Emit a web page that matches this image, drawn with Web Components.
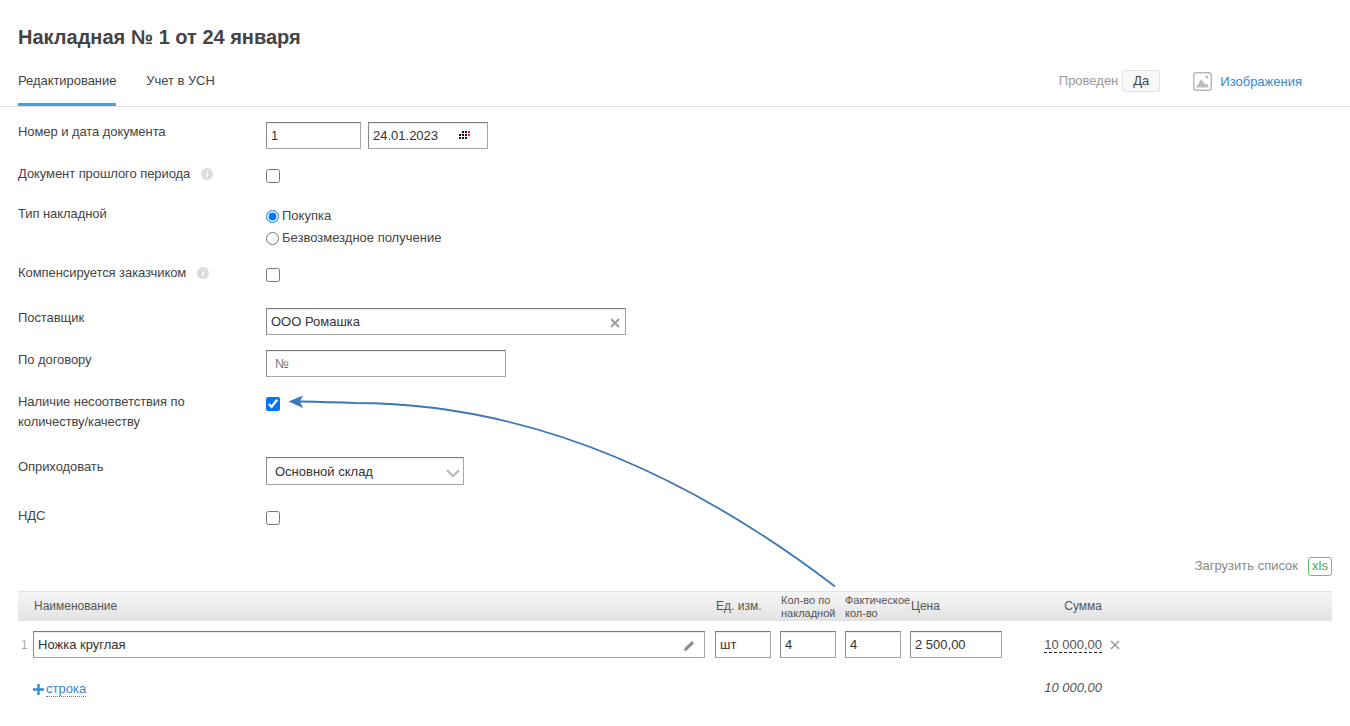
<!DOCTYPE html>
<html lang="ru"><head><meta charset="utf-8"><title>Накладная</title>
<style>
html,body{margin:0;padding:0;background:#fff}
body{font:13px/20px "Liberation Sans",Arial,sans-serif;color:#444;height:726px;overflow:hidden}
</style></head><body>
<inv-page>
  <inv-title>Накладная № 1 от 24 января</inv-title>
  <inv-tabs></inv-tabs>
  <inv-row label="Номер и дата документа" h="42" ct="1">
    <inv-field w="95">1</inv-field><inv-field w="120" pad="4" date gap>24.01.2023</inv-field>
  </inv-row>
  <inv-row label="Документ прошлого периода" info="202" h="40" ct="6"><inv-check></inv-check></inv-row>
  <inv-row label="Тип накладной" h="59" ct="2"><inv-radios></inv-radios></inv-row>
  <inv-row label="Компенсируется заказчиком" info="198" h="45" ct="6"><inv-check></inv-check></inv-row>
  <inv-row label="Поставщик" h="42" ct="1"><inv-field w="360" pad="4" clear>ООО Ромашка</inv-field></inv-row>
  <inv-row label="По договору" h="42" ct="1"><inv-field w="240" pad="8" muted>№</inv-field></inv-row>
  <inv-row label="Наличие несоответствия по количеству/качеству" h="65" ct="6" narrow><inv-check checked></inv-check></inv-row>
  <inv-row label="Оприходовать" h="49" ct="1"><inv-field w="198" pad="8" h="28" select>Основной склад</inv-field></inv-row>
  <inv-row label="НДС" h="50" ct="6"><inv-check></inv-check></inv-row>
  <inv-upload></inv-upload>
  <inv-table></inv-table>
  <inv-arrow></inv-arrow>
</inv-page>
<script>
function def(name,css,html,init){
  customElements.define(name,class extends HTMLElement{
    connectedCallback(){
      if(this.shadowRoot)return;
      const r=this.attachShadow({mode:'open'});
      r.innerHTML='<style>'+css+'</style>'+(typeof html==='function'?html(this):html);
      if(init)init(this,r);
    }
  });
}
def('inv-page',':host{display:block;position:relative;width:1350px;height:726px}','<slot></slot>');
def('inv-title',':host{display:block;padding:24px 18px 0;height:34px;font:bold 20px/26px "Liberation Sans",Arial,sans-serif;color:#444}','<slot></slot>');
const ICON_IMG=`<svg width="19" height="19" viewBox="0 0 19 19"><rect x=".75" y=".75" width="17.500" height="17.500" rx="2.500" fill="#fff" stroke="#b8b8b8" stroke-width="1.500"/><circle cx="14" cy="5" r="1.500" fill="#bbb"/><path d="M3 15.500 8.200 7 12.400 12.800 13.800 11.200 16 15.500Z" fill="#bbb"/></svg>`;
def('inv-tabs',`:host{display:flex;align-items:flex-start;height:48px;padding:0 18px;border-bottom:1px solid #e0e0e0;color:#444}
 .t{height:45px;line-height:45px;margin-right:30px;letter-spacing:-.05px}
 .a{border-bottom:3px solid #44a3dc}
 .sp{flex:1}
 .r{display:flex;align-items:center;height:45px}
 .p{color:#999;margin-right:4px}
 .y{border:1px solid #e2e2e2;background:#f8f8f8;border-radius:3px;height:20px;line-height:20px;width:36px;text-align:center;color:#444;margin-right:33px}
 svg{display:block;margin-right:8px;margin-top:2px}
 .l{color:#3a87c8;margin-right:30px;margin-top:2px}`,
 `<div class="t a">Редактирование</div><div class="t">Учет в УСН</div><div class="sp"></div>
  <div class="r"><span class="p">Проведен</span><span class="y">Да</span>${ICON_IMG}<span class="l">Изображения</span></div>`);
const ICON_INFO=`<svg width="12" height="12" viewBox="0 0 12 12"><circle cx="6" cy="6" r="6" fill="#dcdcdc"/><path d="M5.600 5.200 5.100 9.400H6.600L7.100 5.200Z M5.800 2.400H7.300L7.100 4.100H5.600Z" fill="#fff"/></svg>`;
def('inv-row',`:host{display:flex;align-items:flex-start;padding-left:18px;color:#444}
 .lab{width:248px;flex:none;position:relative;padding-top:1px;letter-spacing:-.07px}
 .lab.n span{display:block;width:180px}
 .i{position:absolute;top:3px}
 .ctl{display:flex;align-items:flex-start}`,
 h=>`<div class="lab ${h.hasAttribute('narrow')?'n':''}"><span>${h.getAttribute('label')}</span>${h.getAttribute('info')?`<span class="i" style="left:${h.getAttribute('info')-18-1}px;width:12px">${ICON_INFO}</span>`:''}</div><div class="ctl" style="padding-top:${h.getAttribute('ct')}px"><slot></slot></div>`,
 h=>{h.style.height=h.getAttribute('h')+'px'; if(!h.previousElementSibling||h.previousElementSibling.tagName==='INV-TABS')h.style.marginTop='14px';});
const DOTS=`<svg class="dots" width="11" height="8" viewBox="0 0 11 8" shape-rendering="crispEdges"><path d="M3 0h2v2H3zM6 0h2v2H6zM0 3h2v2H0zM3 3h2v2H3zM6 3h2v2H6zM0 6h2v2H0zM3 6h2v2H3zM6 6h2v2H6z" fill="#111"/><path d="M9 0h2v2H9zM9 3h2v2H9z" fill="#e8222e"/></svg>`;
const CLR=`<svg class="clr" width="10" height="10" viewBox="0 0 10 10"><path d="M1 1 9 9M9 1 1 9" stroke="#9a9a9a" stroke-width="1.800" fill="none"/></svg>`;
const CHEV=`<svg class="chev" width="14" height="9" viewBox="0 0 14 9"><path d="M1 1.200 7 7.200 13 1.200" stroke="#b5b5b5" stroke-width="2" fill="none"/></svg>`;
const PEN=`<svg class="pen" width="11" height="11" viewBox="0 0 11 11"><path d="M0 11 .7 8 7.800 .9 10.100 3.200 3 10.300Z" fill="#8c8c8c"/></svg>`;
def('inv-field',`:host{display:flex;box-sizing:border-box;align-items:center;position:relative;flex:none;height:27px;background:#fff;
   border:1px solid #a6a6a6;border-top-color:#7a7a7a;border-left-color:#8a8a8a;color:#333;white-space:nowrap;
   box-shadow:inset 0 1px 1px rgba(0,0,0,.08)}
 :host([gap]){margin-left:7px}
 :host([muted]){color:#777}
 :host([select]){padding-top:1px}
 .dots{position:absolute;left:90px;top:8px}
 .clr{position:absolute;right:5px;top:9px}
 .chev{position:absolute;right:3px;top:11px}
 .pen{position:absolute;right:9px;top:8px}`,
 h=>`<slot></slot>${h.hasAttribute('date')?DOTS:''}${h.hasAttribute('clear')?CLR:''}${h.hasAttribute('select')?CHEV:''}${h.hasAttribute('pen')?PEN:''}`,
 h=>{h.style.width=h.getAttribute('w')+'px';h.style.paddingLeft=(h.getAttribute('pad')||4)+'px';if(h.getAttribute('h'))h.style.height=h.getAttribute('h')+'px';});
def('inv-check',`:host{display:block;width:14px;height:14px}
 input{display:block;margin:0;width:14px;height:14px}`,
 h=>`<input type="checkbox" ${h.hasAttribute('checked')?'checked':''}>`);
def('inv-radios',`:host{display:block}
 label{display:flex;align-items:center;height:22px;color:#444}
 input{margin:0 3px 0 0;width:13px;height:13px}`,
 `<label><input type="radio" name="t" checked>Покупка</label><label><input type="radio" name="t">Безвозмездное получение</label>`);
def('inv-upload',`:host{display:flex;justify-content:flex-end;align-items:center;height:20px;padding:1px 18px 0 0;margin-bottom:15px;color:#888}
 .x{box-sizing:border-box;border:1px solid #65bd6c;border-radius:3px;color:#4aa354;height:19px;width:24px;line-height:16px;text-align:center;margin-left:10px}`,
 `<span>Загрузить список</span><span class="x">xls</span>`);
def('inv-table',`:host{display:block;margin:0 18px;color:#444}
 .g{display:grid;grid-template-columns:15px 682px 65px 65px 65px 92px 42px 58px 1fr}
 .h{height:30px;box-sizing:border-box;background:linear-gradient(#f6f6f6,#e2e2e2);border-top:1px solid #e2e2e2;align-items:center;color:#555;font-size:12px;line-height:14px}
 .h .s{font-size:11px;line-height:13px;white-space:nowrap}
 .h .o{padding-bottom:2px}
 .b{margin-top:10px;height:27px;align-items:center}
 .n{color:#aaa;padding-left:3px;font-size:12px}
 .nm{padding-left:1px}
 .sum{text-align:right;grid-column:7 / 9;color:#555}
 .sum u{text-decoration:none;border-bottom:1px dashed #222}
 .x{padding-left:8px;display:flex}
 .f{display:flex;justify-content:space-between;margin-top:20px;padding-left:15px;padding-right:230px}
 .add{color:#3a87c8;display:flex;align-items:center;margin-top:2px}
 .add span{border-bottom:1px dotted #3a87c8;line-height:14px}
 .add svg{margin-right:2px}
 .t{font-style:italic;color:#555}`,
 `<div class="g h"><div></div><div class="nm o">Наименование</div><div class="o" style="padding-left:1px">Ед. изм.</div><div class="s" style="padding-left:1px">Кол-во по<br>накладной</div><div class="s">Фактическое<br>кол-во</div><div class="o" style="padding-left:1px">Цена</div><div class="sum o">Сумма</div><div></div></div>
  <div class="g b"><div class="n">1</div><div><inv-field w="672" pen>Ножка круглая</inv-field></div><div><inv-field w="56">шт</inv-field></div><div><inv-field w="56">4</inv-field></div><div><inv-field w="56">4</inv-field></div><div><inv-field w="92">2 500,00</inv-field></div><div class="sum"><u>10 000,00</u></div><div class="x"><svg width="10" height="10" viewBox="0 0 10 10"><path d="M1 1 9 9M9 1 1 9" stroke="#9a9a9a" stroke-width="1.600" fill="none"/></svg></div></div>
  <div class="f"><div class="add"><svg width="11" height="11" viewBox="0 0 11 11"><path d="M5.500 0v11M0 5.500h11" stroke="#2f8ccf" stroke-width="2.400"/></svg><span>строка</span></div><div class="t">10 000,00</div></div>`);
def('inv-arrow',':host{position:absolute;left:0;top:0;width:1350px;height:726px;pointer-events:none}svg{display:block}',
 `<svg width="1350" height="726" viewBox="0 0 1350 726"><path d="M835 586.500Q595 403 355 403Q330 402 300 401.500" fill="none" stroke="#3c78b8" stroke-width="1.800"/><path d="M288.500 401.500 303 395.500 300 401.500 303 408Z" fill="#3c78b8"/></svg>`);
</script>
</body></html>
